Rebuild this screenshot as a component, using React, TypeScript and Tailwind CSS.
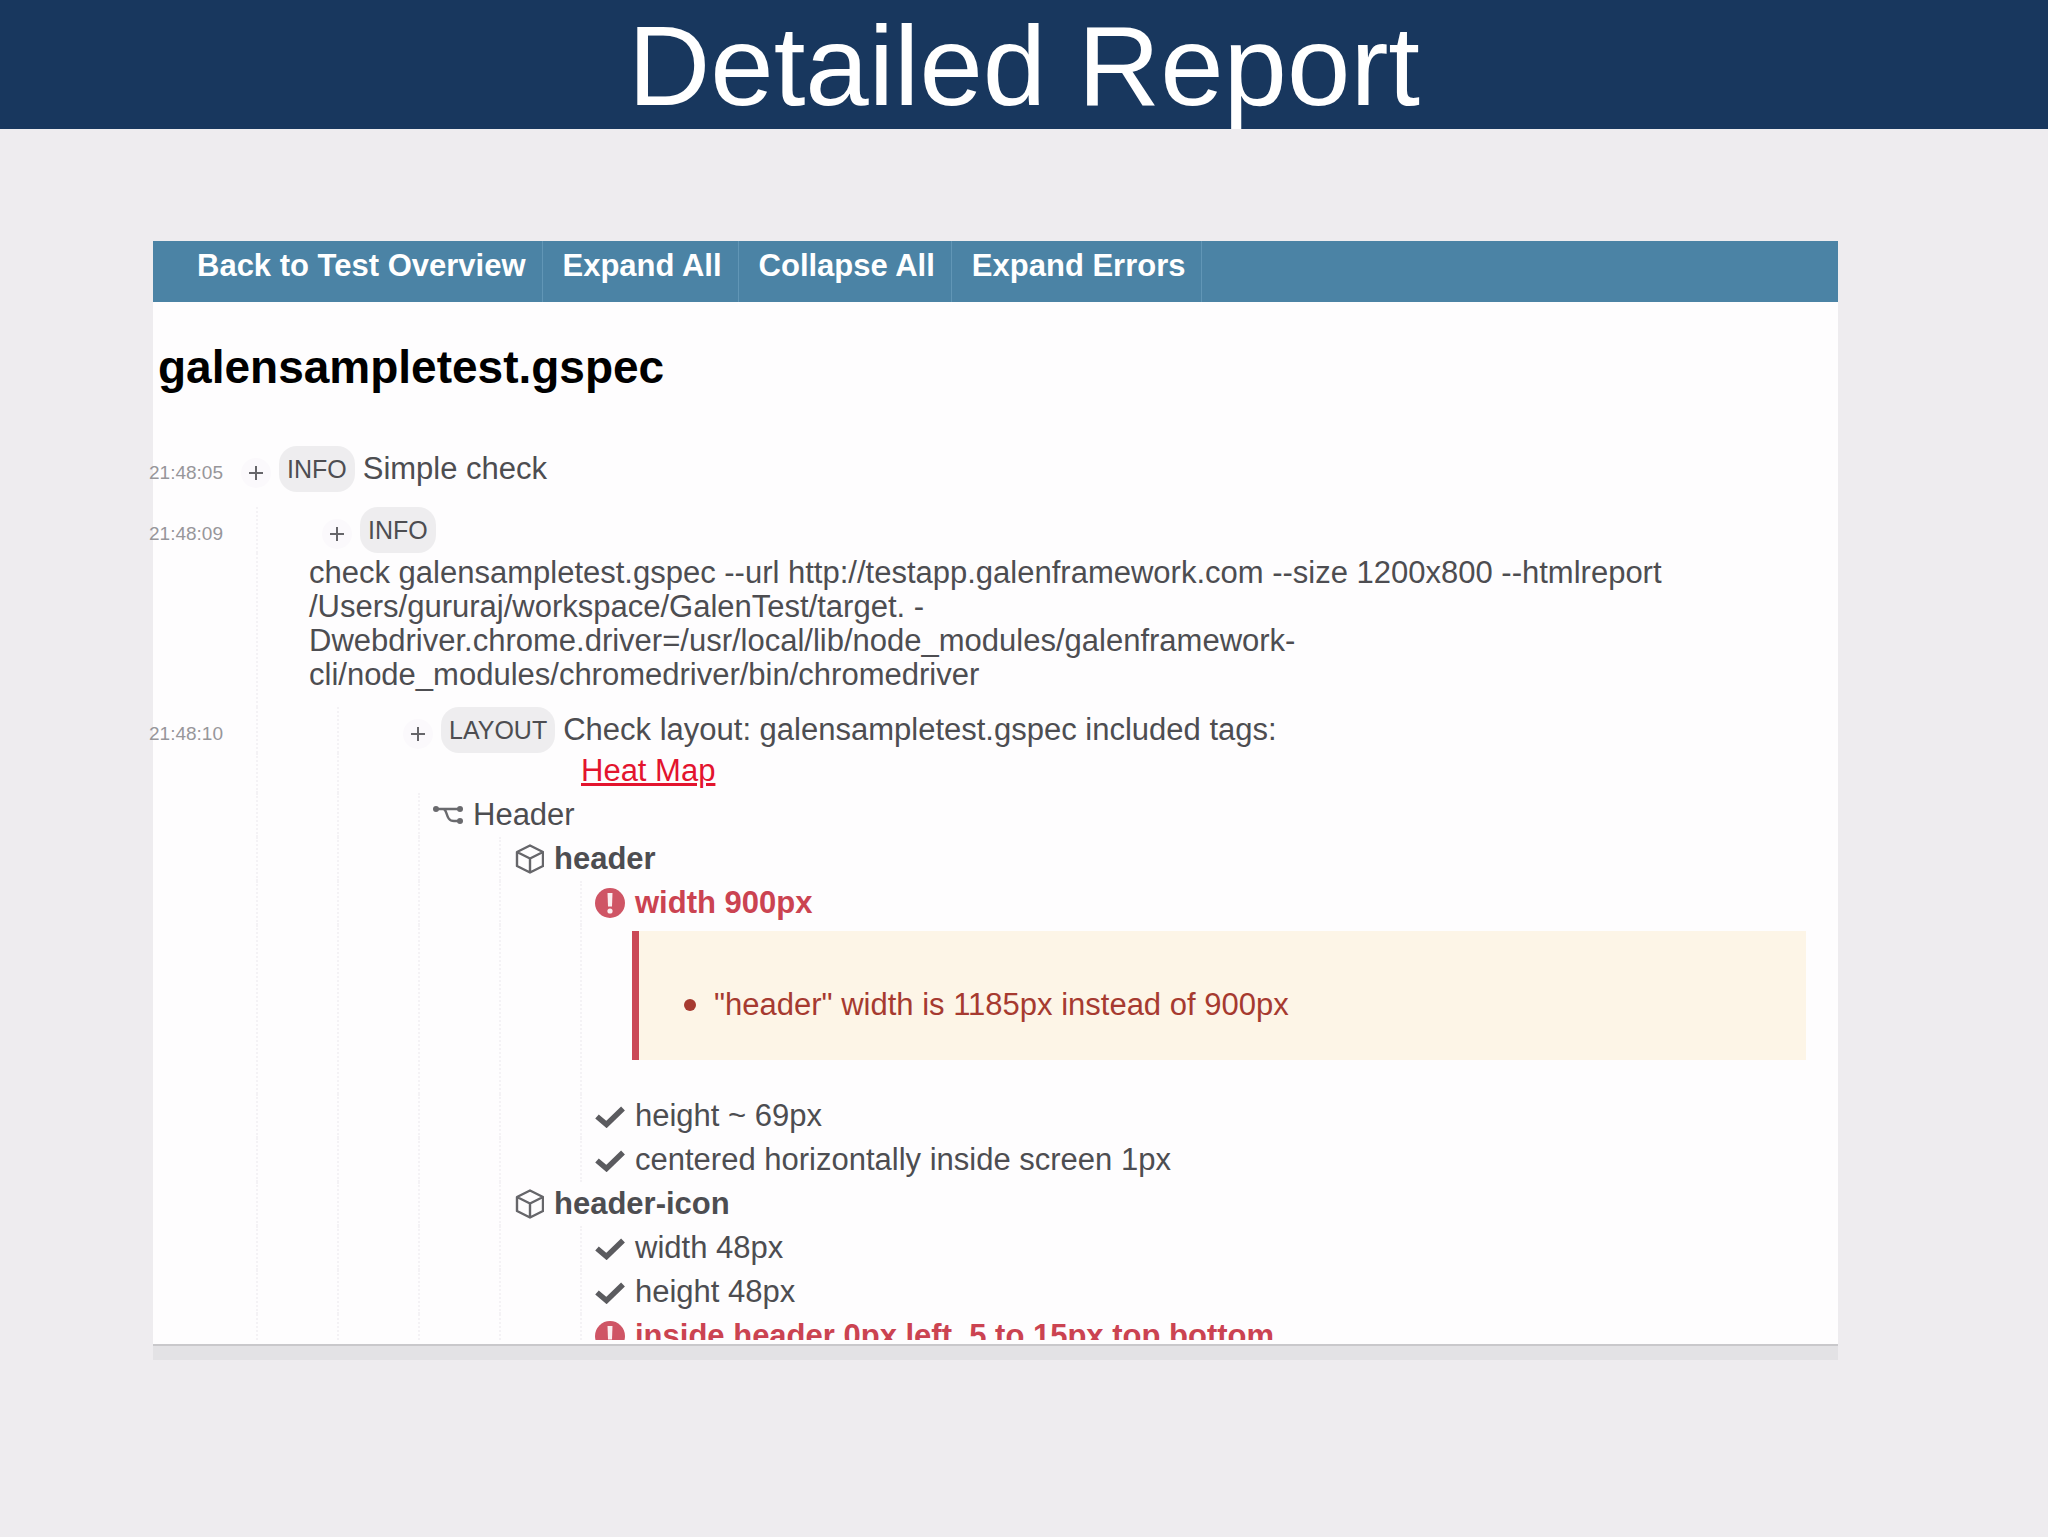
import type { ReactNode } from "react";

type RowProps = {
  depth?: number;
  time?: string;
  className?: string;
  children: ReactNode;
};

type LogEntryProps = {
  depth: number;
  time: string;
  label: string;
  className?: string;
  children?: ReactNode;
};

type TreeItemProps = {
  depth: number;
  icon: ReactNode;
  className?: string;
  children: ReactNode;
};

function BranchIcon() {
  return (
    <svg width="30" height="20" viewBox="0 0 30 20" fill="none" aria-hidden="true">
      <path d="M3 4H27M10 4C15 4 12 16 21 16H27" stroke="#6a6a6e" strokeWidth="2.4" />
      <circle cx="3" cy="4" r="3" fill="#6a6a6e" />
      <circle cx="27" cy="4" r="3" fill="#6a6a6e" />
      <circle cx="27" cy="16" r="3" fill="#6a6a6e" />
    </svg>
  );
}

function CubeIcon() {
  return (
    <svg width="30" height="30" viewBox="0 0 30 30" fill="none" aria-hidden="true">
      <path
        d="M16 1.5L29 8V22L16 28.5L3 22V8ZM3 8L16 14.5L29 8M16 14.5V28.5"
        stroke="#66666a"
        strokeWidth="2.4"
        strokeLinejoin="round"
      />
    </svg>
  );
}

function ErrorIcon() {
  return (
    <svg width="30" height="30" viewBox="0 0 30 30" aria-hidden="true">
      <circle cx="15" cy="15" r="15" fill="#cf5565" />
      <path d="M12.5 5H17.5L17 18.5H13Z" fill="#fbeef0" />
      <circle cx="15" cy="23" r="2.6" fill="#fbeef0" />
    </svg>
  );
}

function CheckIcon() {
  return (
    <svg width="30" height="24" viewBox="0 0 30 24" fill="none" aria-hidden="true">
      <path d="M2 12.5L11.5 20.5L28 4.5" stroke="#5b5b5f" strokeWidth="5.5" />
    </svg>
  );
}

// One dotted guide per nesting level, drawn in every row so the lines join up
function Guides({ depth, narrowLast = false }: { depth: number; narrowLast?: boolean }) {
  return (
    <>
      {[...Array(depth)].map((_, index) => (
        <div
          key={index}
          className={
            narrowLast && index === depth - 1
              ? "w-[30px] shrink-0 self-stretch pl-[15px]"
              : "w-[81px] shrink-0 self-stretch pl-[15px]"
          }
        >
          <div className="h-full border-l-2 border-dotted border-[#f4f2f5]" />
        </div>
      ))}
    </>
  );
}

function Row({ depth = 0, time, className = "", children }: RowProps) {
  return (
    <div className="flex">
      <div className="mr-[18px] flex h-[46px] w-[70px] shrink-0 items-center justify-end pt-2 text-[19px] text-[#97969a]">
        {time}
      </div>
      <Guides depth={depth} />
      <div className={`min-w-0 flex-1 ${className}`}>{children}</div>
    </div>
  );
}

function LogEntry({ depth, time, label, className = "", children }: LogEntryProps) {
  return (
    <Row depth={depth} time={time} className={className}>
      <div className="flex h-[46px] items-center gap-2">
        <button
          type="button"
          aria-label="Expand"
          className="mt-2 flex size-[30px] shrink-0 items-center justify-center rounded-full bg-[#fbf9fc]"
        >
          <svg width="14" height="14" viewBox="0 0 14 14" aria-hidden="true">
            <path d="M7 0V14M0 7H14" stroke="#66666a" strokeWidth="2" />
          </svg>
        </button>
        <span className="rounded-[18px] bg-[#eeedef] px-2 text-[25px] leading-[46px]">
          {label}
        </span>
        {children}
      </div>
    </Row>
  );
}

function TreeItem({ depth, icon, className = "h-[44px]", children }: TreeItemProps) {
  return (
    <div className={`flex overflow-hidden pl-[88px] ${className}`}>
      <Guides depth={depth} narrowLast />
      <div className="flex h-[44px] items-center gap-2.5">
        <span className="flex w-[30px] justify-center">{icon}</span>
        <span>{children}</span>
      </div>
    </div>
  );
}

const navItem = "block border-r border-[#6196b6] pr-4 pb-[11px] pl-5 leading-[50px]";

export default function App() {
  return (
    <div className="min-h-screen bg-[#eeecef] font-['Liberation_Sans',Arial,sans-serif]">
      <header className="bg-[#18375e] pt-[3px] text-center">
        <h1 className="text-[114px] leading-[126px] text-white">Detailed Report</h1>
      </header>

      <main className="mt-[112px] mr-[210px] ml-[153px] bg-[#fefdfe]">
        <nav className="flex bg-[#4b83a5] pl-6 text-[31px] font-bold text-white">
          <a href="#overview" className={navItem}>
            Back to Test Overview
          </a>
          <button type="button" className={navItem}>
            Expand All
          </button>
          <button type="button" className={navItem}>
            Collapse All
          </button>
          <button type="button" className={navItem}>
            Expand Errors
          </button>
        </nav>

        <h2 className="px-[5px] pt-[38px] pb-[52px] text-[46px] leading-[54px] font-bold text-black">
          galensampletest.gspec
        </h2>

        <section className="text-[31px] leading-[34px] text-[#4d4d51]">
          <LogEntry depth={0} time="21:48:05" label="INFO" className="pb-[15px]">
            <span>Simple check</span>
          </LogEntry>

          <LogEntry depth={1} time="21:48:09" label="INFO" />
          <div className="flex pl-[88px]">
            <Guides depth={1} narrowLast />
            <p className="pt-[3px] pb-[15px] pl-[38px]">
              check galensampletest.gspec --url http://testapp.galenframework.com --size 1200x800 --htmlreport
              <br />
              /Users/gururaj/workspace/GalenTest/target. -
              <br />
              Dwebdriver.chrome.driver=/usr/local/lib/node_modules/galenframework-
              <br />
              cli/node_modules/chromedriver/bin/chromedriver
            </p>
          </div>

          <LogEntry depth={2} time="21:48:10" label="LAYOUT">
            <span>Check layout: galensampletest.gspec included tags:</span>
          </LogEntry>
          <div className="flex pl-[88px]">
            <Guides depth={2} />
            <div className="pt-px pb-[5px] pl-[178px]">
              <a href="#heatmap" className="text-[#e3142e] underline">
                Heat Map
              </a>
            </div>
          </div>

          <TreeItem depth={3} icon={<BranchIcon />}>
            Header
          </TreeItem>
          <TreeItem depth={4} icon={<CubeIcon />}>
            <b>header</b>
          </TreeItem>
          <TreeItem depth={5} icon={<ErrorIcon />}>
            <b className="text-[#cb4351]">width 900px</b>
          </TreeItem>

          <div className="flex pl-[88px]">
            <Guides depth={5} narrowLast />
            <div className="flex-1 pt-1.5 pr-8 pb-[34px] pl-[37px]">
              <ul className="border-l-[7px] border-[#cb4856] bg-[#fdf5e7] pt-[57px] pb-[38px] pl-[45px] text-[#a63a30]">
                <li className="flex items-center gap-[18px] before:size-3 before:rounded-full before:bg-[#a63a30]">
                  "header" width is 1185px instead of 900px
                </li>
              </ul>
            </div>
          </div>

          <TreeItem depth={5} icon={<CheckIcon />}>
            height ~ 69px
          </TreeItem>
          <TreeItem depth={5} icon={<CheckIcon />}>
            centered horizontally inside screen 1px
          </TreeItem>
          <TreeItem depth={4} icon={<CubeIcon />}>
            <b>header-icon</b>
          </TreeItem>
          <TreeItem depth={5} icon={<CheckIcon />}>
            width 48px
          </TreeItem>
          <TreeItem depth={5} icon={<CheckIcon />}>
            height 48px
          </TreeItem>
          <TreeItem depth={5} icon={<ErrorIcon />} className="h-[26px]">
            <b className="text-[#cb4351]">inside header 0px left, 5 to 15px top bottom</b>
          </TreeItem>
        </section>

        <div className="mt-1 h-4 border-t-2 border-[#c9c8cb] bg-[#e3e2e5]" />
      </main>
    </div>
  );
}
